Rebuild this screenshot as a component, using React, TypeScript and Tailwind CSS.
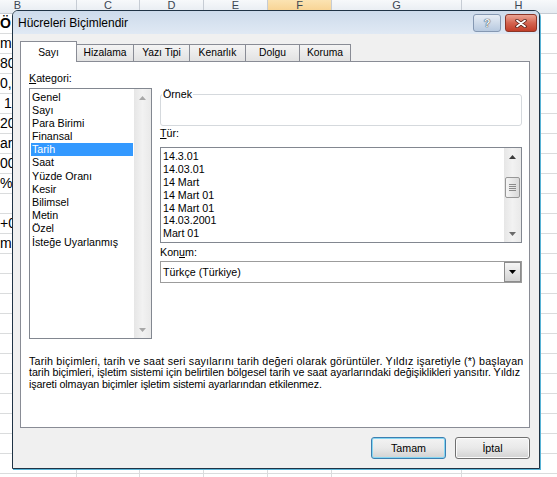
import React from "react";

const colW = ["w-[118px]", "w-[63px]", "w-[64px]", "w-[64px]", "w-[64px]", "w-[130px]", "w-[114px]"];
const letters = ["B", "C", "D", "E", "F", "G", "H"];
const leftText = ["Ö", "me", "80", "0,0", "1", "20", "ar", "00", "%", "", "+0", "m"];

function Sheet() {
  const rows = Array.from({ length: 24 }, (_, i) => i);
  return (
    <div className="ml-[-41px] flex flex-col">
      <div className="flex h-[14px] border-b border-[#c6ccd4]">
        {letters.map((l, i) => (
          <div
            key={l}
            className={`${colW[i]} flex-none border-r border-[#c6ccd4] text-center text-[11px] leading-none text-[#3b4553] ${
              l === "F" ? "bg-linear-to-b from-[#fbe3b2] to-[#f7d08c]" : "bg-linear-to-b from-[#f7f9fb] to-[#e6ebf1]"
            }`}
          >
            <span className="block">{l}</span>
          </div>
        ))}
      </div>
      {rows.map((r) => (
        <div key={r} className="flex h-[20px]">
          {colW.map((w, i) => (
            <div key={i} className={`${w} h-[20px] flex-none overflow-hidden whitespace-nowrap border-b border-r border-[#dadcdd]`}>
              {i === 0 && leftText[r] ? (
                <span
                  className={`block text-[14px] leading-[19px] text-black ${r === 0 ? "font-bold" : ""} ${
                    leftText[r] === "1" ? "pl-[45px]" : "pl-[41px]"
                  }`}
                >
                  {leftText[r]}
                </span>
              ) : null}
            </div>
          ))}
        </div>
      ))}
    </div>
  );
}

function Arrow({ dir, color }: { dir: "up" | "down"; color: string }) {
  return (
    <svg width="7" height="4" viewBox="0 0 7 4">
      {dir === "up" ? <polygon points="3.5,0 7,4 0,4" fill={color} /> : <polygon points="0,0 7,0 3.5,4" fill={color} />}
    </svg>
  );
}

function ScrollTrack({ children }: { children?: React.ReactNode }) {
  return (
    <div className="flex h-full w-[17px] flex-none flex-col bg-linear-to-r from-[#e6e6e6] via-[#f2f2f2] to-[#e9e9e9]">
      {children}
    </div>
  );
}

const kategori = [
  "Genel",
  "Sayı",
  "Para Birimi",
  "Finansal",
  "Tarih",
  "Saat",
  "Yüzde Oranı",
  "Kesir",
  "Bilimsel",
  "Metin",
  "Özel",
  "İsteğe Uyarlanmış",
];

const turler = ["14.3.01", "14.03.01", "14 Mart", "14 Mart 01", "14 Mart 01", "14.03.2001", "Mart 01"];

function Tab({ w, children }: { w: string; children: React.ReactNode }) {
  return (
    <div
      className={`${w} -ml-px mb-px flex h-[17px] flex-none items-center justify-center border border-b-0 border-[#898c95] bg-linear-to-b from-[#f4f4f4] to-[#e2e2e2] text-[10.3px] leading-none text-black`}
    >
      {children}
    </div>
  );
}

function Button({ children, primary }: { children: React.ReactNode; primary?: boolean }) {
  return (
    <div
      className={`flex h-[22px] w-[75px] items-center justify-center rounded-[3px] border bg-linear-to-b from-[#f3f3f3] via-[#e9e9e9] to-[#d2d2d2] text-[10.7px] text-black ${
        primary
          ? "border-[#3c7fb1] shadow-[inset_0_0_0_1px_#86d6f2]"
          : "border-[#707070] shadow-[inset_0_0_0_1px_#fbfbfb]"
      }`}
    >
      {children}
    </div>
  );
}

function Dialog() {
  return (
    <div className="absolute left-[12px] top-[10px] flex h-[459px] w-[528px] flex-col overflow-hidden rounded-t-[6px] border border-[#1f3345] bg-[#f0f0f0] shadow-[1px_1px_0_#57b3d6]">
      {/* title bar */}
      <div className="flex h-[23px] flex-none bg-linear-to-b from-[#cddbeb] to-[#e0e9f4] pl-[5px]">
        <span className="self-center text-[12px] leading-none text-black">Hücreleri Biçimlendir</span>
        <div className="ml-auto mr-[2px] mt-[3px] flex gap-[4px] self-start">
          <div className="flex h-[18px] w-[28px] items-center justify-center rounded-[3px] border border-[#8598b2] bg-linear-to-b from-[#e6edf5] via-[#cfdbea] to-[#b7c9df]">
            <span className="text-[11px] font-bold leading-none text-[#f4f6f8] [text-shadow:0_0_1px_#253445,0_0_1px_#253445]">?</span>
          </div>
          <div className="flex h-[18px] w-[32px] items-center justify-center rounded-[3px] border border-[#8b3527] bg-linear-to-b from-[#eaa596] via-[#d4634f] to-[#c13d28]">
            <svg width="12" height="9" viewBox="0 0 12 9">
              <path d="M2 1.5 L10 7.5 M10 1.5 L2 7.5" stroke="#4f1b13" strokeWidth="3.4" strokeLinecap="round" />
              <path d="M2 1.5 L10 7.5 M10 1.5 L2 7.5" stroke="#ffffff" strokeWidth="1.8" strokeLinecap="round" />
            </svg>
          </div>
        </div>
      </div>

      {/* client */}
      <div className="flex flex-1 flex-col pl-[7px] pr-[9px] pt-[7px]">
        {/* tabs */}
        <div className="relative z-10 -mb-px flex h-[21px] flex-none items-end">
          <div className="relative z-10 flex h-[21px] w-[57px] flex-none items-center justify-center border border-b-0 border-[#898c95] bg-white pt-[2px] text-[10.3px] leading-none text-black">
            Sayı
          </div>
          <Tab w="w-[58px]">Hizalama</Tab>
          <Tab w="w-[57px]">Yazı Tipi</Tab>
          <Tab w="w-[57px]">Kenarlık</Tab>
          <Tab w="w-[55px]">Dolgu</Tab>
          <Tab w="w-[52px]">Koruma</Tab>
        </div>

        {/* panel */}
        <div className="flex h-[367px] flex-none flex-col border border-[#898c95] bg-white text-black">
          <div className="flex items-start">
            {/* left column */}
            <div className="ml-[8px] mt-[10px] flex flex-col">
              <div className="h-[13px] text-[10.7px] leading-[13px]">
                <span className="underline">K</span>ategori:
              </div>
              <div className="mt-[3px] flex h-[251px] w-[123px] border border-[#828790] bg-white">
                <div className="flex flex-1 flex-col pt-[1.5px]">
                  {kategori.map((k) => (
                    <div
                      key={k}
                      className={`mx-[1px] h-[13.2px] whitespace-nowrap pl-[1px] text-[10.7px] leading-[13.2px] ${
                        k === "Tarih" ? "bg-[#3399ff] text-white" : "text-black"
                      }`}
                    >
                      {k}
                    </div>
                  ))}
                </div>
                <ScrollTrack>
                  <div className="flex h-[17px] items-center justify-center">
                    <Arrow dir="up" color="#a8a8a8" />
                  </div>
                  <div className="flex-1" />
                  <div className="flex h-[17px] items-center justify-center">
                    <Arrow dir="down" color="#a8a8a8" />
                  </div>
                </ScrollTrack>
              </div>
            </div>

            {/* right column */}
            <div className="ml-[8px] mt-[27px] flex w-[362px] flex-col">
              <fieldset className="h-[37px] rounded-[3px] border border-[#d5d9dd]">
                <legend className="ml-[1px] px-[1px] text-[10.7px] leading-[11px]">Örnek</legend>
              </fieldset>
              <div className="mt-[1px] h-[13px] text-[10.7px] leading-[13px]">
                <span className="underline">T</span>ür:
              </div>
              <div className="mt-[7px] flex h-[96px] border border-[#828790] bg-white">
                <div className="flex flex-1 flex-col pl-[2px] pt-[2px]">
                  {turler.map((t, i) => (
                    <div key={i} className="h-[12.9px] whitespace-nowrap text-[10.7px] leading-[12.9px]">
                      {t}
                    </div>
                  ))}
                </div>
                <ScrollTrack>
                  <div className="flex h-[17px] flex-none items-center justify-center">
                    <Arrow dir="up" color="#3c3c3c" />
                  </div>
                  <div className="h-[12px] flex-none" />
                  <div className="mx-[1px] flex h-[21px] flex-none flex-col items-center justify-center gap-[1px] rounded-[2px] border border-[#979797] bg-linear-to-r from-[#f5f5f5] to-[#d9d9d9]">
                    <div className="h-px w-[7px] bg-[#8a8a8a]" />
                    <div className="h-px w-[7px] bg-[#8a8a8a]" />
                    <div className="h-px w-[7px] bg-[#8a8a8a]" />
                    <div className="h-px w-[7px] bg-[#8a8a8a]" />
                  </div>
                  <div className="flex-1" />
                  <div className="flex h-[17px] flex-none items-center justify-center">
                    <Arrow dir="down" color="#6a6a6a" />
                  </div>
                </ScrollTrack>
              </div>
              <div className="mt-[3px] h-[13px] text-[10.7px] leading-[13px]">
                Kon<span className="underline">u</span>m:
              </div>
              <div className="mt-[2px] flex h-[22px] border border-[#9c9c9c] bg-white">
                <div className="flex flex-1 items-center pl-[2px] text-[10.7px]">Türkçe (Türkiye)</div>
                <div className="flex h-full w-[17px] flex-none items-center justify-center border border-[#8c8c8c] bg-linear-to-b from-[#f6f6f6] to-[#d3d3d3]">
                  <Arrow dir="down" color="#000000" />
                </div>
              </div>
            </div>
          </div>

          {/* description */}
          <div className="ml-[8px] mt-[17px] flex flex-col whitespace-nowrap text-[10.7px] leading-[11.3px] text-black">
            <span className="tracking-[0.2px]">
              Tarih biçimleri, tarih ve saat seri sayılarını tarih değeri olarak görüntüler. Yıldız işaretiyle (*) başlayan
            </span>
            <span className="tracking-[-0.04px]">
              tarih biçimleri, işletim sistemi için belirtilen bölgesel tarih ve saat ayarlarındaki değişiklikleri yansıtır. Yıldız
            </span>
            <span className="tracking-[-0.12px]">işareti olmayan biçimler işletim sistemi ayarlarından etkilenmez.</span>
          </div>
        </div>

        {/* buttons */}
        <div className="mt-[9px] flex justify-end gap-[9px]">
          <Button primary>Tamam</Button>
          <Button>İptal</Button>
        </div>
      </div>
    </div>
  );
}

export default function App() {
  return (
    <div className="relative h-[477px] w-[557px] overflow-hidden bg-white font-['Liberation_Sans',sans-serif]">
      <Sheet />
      <Dialog />
    </div>
  );
}
